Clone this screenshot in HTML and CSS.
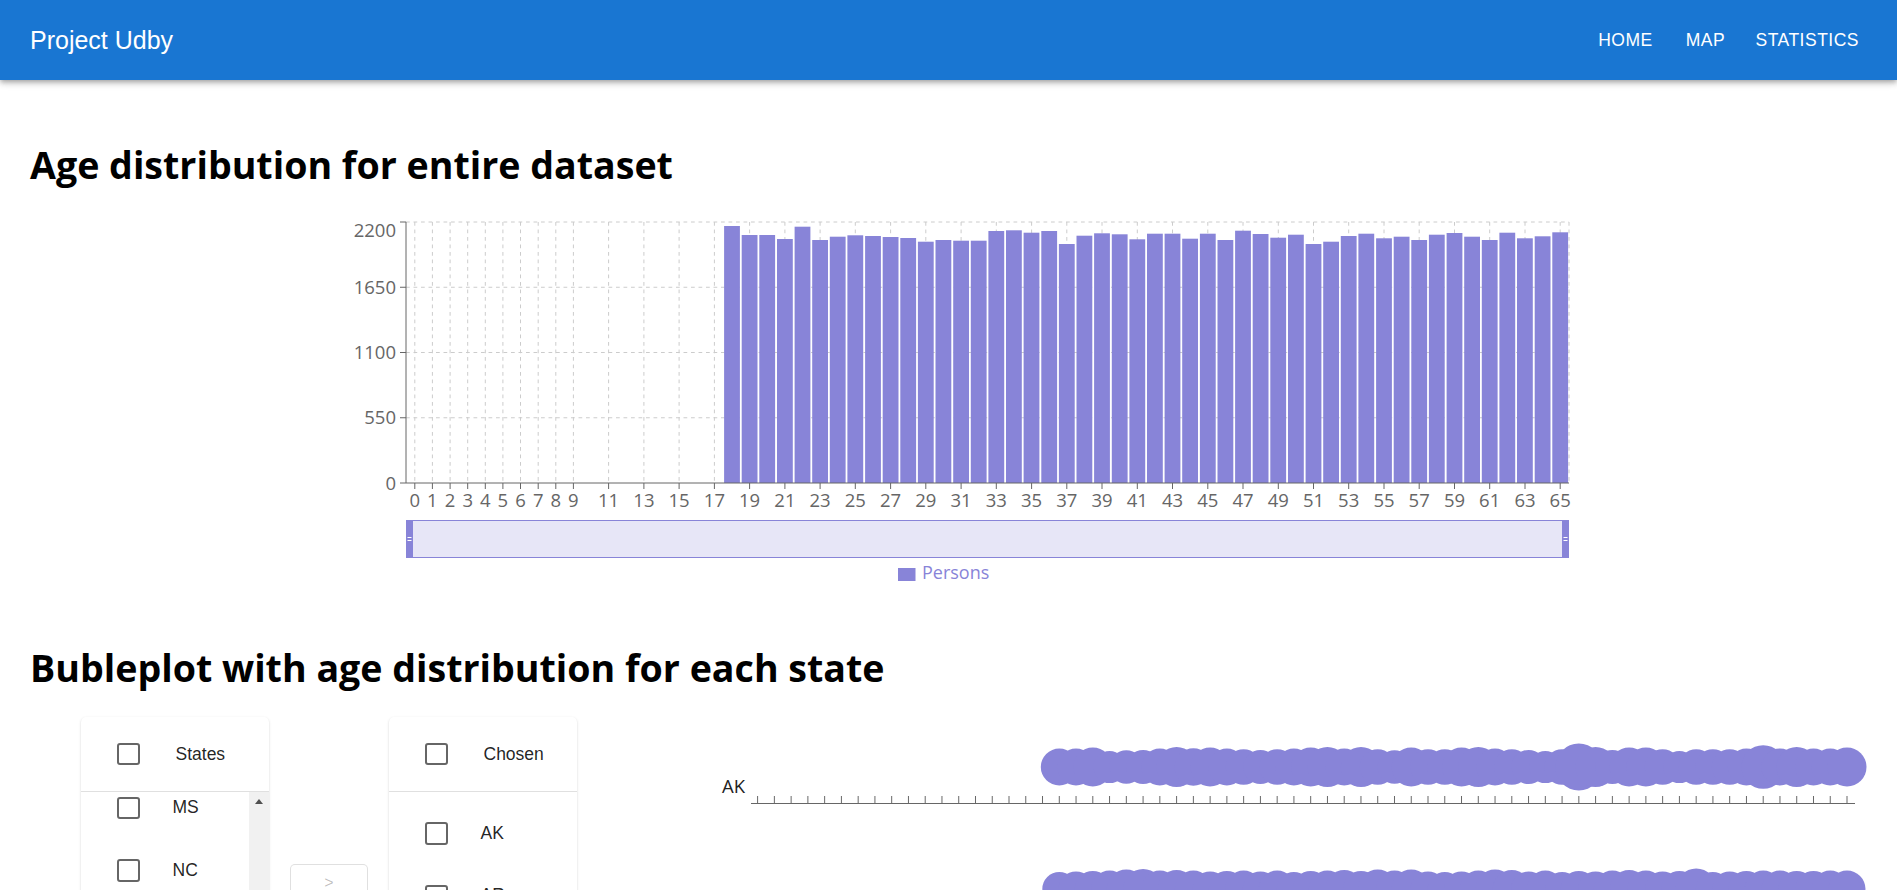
FILE: index.html
```html
<!DOCTYPE html>
<html lang="en">
<head>
<meta charset="utf-8">
<title>Project Udby</title>
<link rel="stylesheet" href="styles.css">
</head>
<body>
<header class="appbar">
  <div class="toolbar">
    <div class="brand">Project Udby</div>
    <nav class="nav">
      <a class="nav-btn">HOME</a>
      <a class="nav-btn">MAP</a>
      <a class="nav-btn">STATISTICS</a>
    </nav>
  </div>
</header>

<main class="page">
  <h1 class="title">Age distribution for entire dataset</h1>

  <div class="chart-wrap">
    <svg class="bar-chart" width="1253" height="385" viewBox="322 210 1253 385">
      <g class="grid" fill="none" stroke="#ccc" stroke-dasharray="3.75 3.75">
        <path d="M406 222H1569M406 287.25H1569M406 352.5H1569M406 417.75H1569"/>
        <path d="M414.8 222V483M432.4 222V483M450.1 222V483M467.7 222V483M485.3 222V483M502.9 222V483M520.5 222V483M538.2 222V483M555.8 222V483M573.4 222V483M608.6 222V483M643.9 222V483M679.1 222V483M714.4 222V483M749.6 222V483M784.9 222V483M820.1 222V483M855.3 222V483M890.6 222V483M925.8 222V483M961.1 222V483M996.3 222V483M1031.6 222V483M1066.8 222V483M1102 222V483M1137.3 222V483M1172.5 222V483M1207.8 222V483M1243 222V483M1278.3 222V483M1313.5 222V483M1348.7 222V483M1384 222V483M1419.2 222V483M1454.5 222V483M1489.7 222V483M1525 222V483M1560.2 222V483M1569 222V483"/>
      </g>
      <g class="bars" fill="#8884d8">
        <rect x="724.1" y="226" width="15.8" height="257"/>
        <rect x="741.7" y="235" width="15.8" height="248"/>
        <rect x="759.3" y="235" width="15.8" height="248"/>
        <rect x="777" y="239" width="15.8" height="244"/>
        <rect x="794.6" y="226.7" width="15.8" height="256.3"/>
        <rect x="812.2" y="240" width="15.8" height="243"/>
        <rect x="829.8" y="236.7" width="15.8" height="246.3"/>
        <rect x="847.4" y="235.3" width="15.8" height="247.7"/>
        <rect x="865.1" y="236" width="15.8" height="247"/>
        <rect x="882.7" y="237" width="15.8" height="246"/>
        <rect x="900.3" y="238" width="15.8" height="245"/>
        <rect x="917.9" y="241.7" width="15.8" height="241.3"/>
        <rect x="935.5" y="240" width="15.8" height="243"/>
        <rect x="953.2" y="240.7" width="15.8" height="242.3"/>
        <rect x="970.8" y="240.7" width="15.8" height="242.3"/>
        <rect x="988.4" y="231" width="15.8" height="252"/>
        <rect x="1006" y="230.3" width="15.8" height="252.7"/>
        <rect x="1023.6" y="232.7" width="15.8" height="250.3"/>
        <rect x="1041.3" y="231" width="15.8" height="252"/>
        <rect x="1058.9" y="244" width="15.8" height="239"/>
        <rect x="1076.5" y="235.7" width="15.8" height="247.3"/>
        <rect x="1094.1" y="233.3" width="15.8" height="249.7"/>
        <rect x="1111.8" y="234.3" width="15.8" height="248.7"/>
        <rect x="1129.4" y="239.3" width="15.8" height="243.7"/>
        <rect x="1147" y="233.7" width="15.8" height="249.3"/>
        <rect x="1164.6" y="233.7" width="15.8" height="249.3"/>
        <rect x="1182.2" y="238.7" width="15.8" height="244.3"/>
        <rect x="1199.9" y="233.7" width="15.8" height="249.3"/>
        <rect x="1217.5" y="240" width="15.8" height="243"/>
        <rect x="1235.1" y="230.7" width="15.8" height="252.3"/>
        <rect x="1252.7" y="234" width="15.8" height="249"/>
        <rect x="1270.3" y="237.7" width="15.8" height="245.3"/>
        <rect x="1288" y="234.7" width="15.8" height="248.3"/>
        <rect x="1305.6" y="244" width="15.8" height="239"/>
        <rect x="1323.2" y="241.7" width="15.8" height="241.3"/>
        <rect x="1340.8" y="236" width="15.8" height="247"/>
        <rect x="1358.4" y="233.7" width="15.8" height="249.3"/>
        <rect x="1376.1" y="238.3" width="15.8" height="244.7"/>
        <rect x="1393.7" y="236.7" width="15.8" height="246.3"/>
        <rect x="1411.3" y="240" width="15.8" height="243"/>
        <rect x="1428.9" y="234.7" width="15.8" height="248.3"/>
        <rect x="1446.6" y="233" width="15.8" height="250"/>
        <rect x="1464.2" y="236.7" width="15.8" height="246.3"/>
        <rect x="1481.8" y="240" width="15.8" height="243"/>
        <rect x="1499.4" y="232.7" width="15.8" height="250.3"/>
        <rect x="1517" y="238.3" width="15.8" height="244.7"/>
        <rect x="1534.7" y="236.3" width="15.8" height="246.7"/>
        <rect x="1552.3" y="232.3" width="15.8" height="250.7"/>
      </g>
      <g class="axes" fill="none" stroke="#666">
        <path d="M406 222V483H1569"/>
        <path d="M400 222H406M400 287.25H406M400 352.5H406M400 417.75H406M400 483H406"/>
        <path d="M414.8 483V489M432.4 483V489M450.1 483V489M467.7 483V489M485.3 483V489M502.9 483V489M520.5 483V489M538.2 483V489M555.8 483V489M573.4 483V489M608.6 483V489M643.9 483V489M679.1 483V489M714.4 483V489M749.6 483V489M784.9 483V489M820.1 483V489M855.3 483V489M890.6 483V489M925.8 483V489M961.1 483V489M996.3 483V489M1031.6 483V489M1066.8 483V489M1102 483V489M1137.3 483V489M1172.5 483V489M1207.8 483V489M1243 483V489M1278.3 483V489M1313.5 483V489M1348.7 483V489M1384 483V489M1419.2 483V489M1454.5 483V489M1489.7 483V489M1525 483V489M1560.2 483V489"/>
      </g>
      <g class="tick-text y-ticks" text-anchor="end">
        <text x="396" y="236.6">2200</text>
        <text x="396" y="293.8">1650</text>
        <text x="396" y="359.1">1100</text>
        <text x="396" y="424.3">550</text>
        <text x="396" y="489.6">0</text>
      </g>
      <g class="tick-text x-ticks" text-anchor="middle">
        <text x="414.8" y="506.6">0</text><text x="432.4" y="506.6">1</text><text x="450.1" y="506.6">2</text><text x="467.7" y="506.6">3</text><text x="485.3" y="506.6">4</text><text x="502.9" y="506.6">5</text><text x="520.5" y="506.6">6</text><text x="538.2" y="506.6">7</text><text x="555.8" y="506.6">8</text><text x="573.4" y="506.6">9</text>
        <text x="608.6" y="506.6">11</text><text x="643.9" y="506.6">13</text><text x="679.1" y="506.6">15</text><text x="714.4" y="506.6">17</text><text x="749.6" y="506.6">19</text><text x="784.9" y="506.6">21</text><text x="820.1" y="506.6">23</text><text x="855.3" y="506.6">25</text><text x="890.6" y="506.6">27</text><text x="925.8" y="506.6">29</text><text x="961.1" y="506.6">31</text><text x="996.3" y="506.6">33</text><text x="1031.6" y="506.6">35</text><text x="1066.8" y="506.6">37</text><text x="1102" y="506.6">39</text><text x="1137.3" y="506.6">41</text><text x="1172.5" y="506.6">43</text><text x="1207.8" y="506.6">45</text><text x="1243" y="506.6">47</text><text x="1278.3" y="506.6">49</text><text x="1313.5" y="506.6">51</text><text x="1348.7" y="506.6">53</text><text x="1384" y="506.6">55</text><text x="1419.2" y="506.6">57</text><text x="1454.5" y="506.6">59</text><text x="1489.7" y="506.6">61</text><text x="1525" y="506.6">63</text><text x="1560.2" y="506.6">65</text>
      </g>
      <g class="brush">
        <rect x="406.5" y="520.5" width="1162" height="37" fill="#fff" stroke="#8884d8"/>
        <rect x="413" y="521" width="1149" height="36" fill="#8884d8" fill-opacity="0.2"/>
        <rect x="406" y="520" width="7" height="38" fill="#8884d8"/>
        <path d="M407.5 537.5H411.5M407.5 540.5H411.5" stroke="#fff"/>
        <rect x="1562" y="520" width="7" height="38" fill="#8884d8"/>
        <path d="M1563.5 537.5H1567.5M1563.5 540.5H1567.5" stroke="#fff"/>
      </g>
      <g class="legend">
        <rect x="898" y="568" width="17.5" height="13" fill="#8884d8"/>
        <text class="legend-text" x="922" y="579">Persons</text>
      </g>
    </svg>
  </div>

  <h2 class="title">Bubleplot with age distribution for each state</h2>

  <section class="bubble-section">
    <div class="transfer">
      <div class="card">
        <div class="card-head">
          <span class="checkbox"></span>
          <span class="head-label">States</span>
        </div>
        <div class="card-body">
          <div class="list-viewport">
            <ul class="list list-scrolled">
              <li class="item"><span class="checkbox"></span><span class="item-label">MS</span></li>
              <li class="item"><span class="checkbox"></span><span class="item-label">NC</span></li>
            </ul>
          </div>
          <div class="scrollbar"><span class="scroll-arrow"></span></div>
        </div>
      </div>

      <div class="move-col">
        <button class="move-btn" disabled>&gt;</button>
        <button class="move-btn" disabled>&lt;</button>
      </div>

      <div class="card">
        <div class="card-head">
          <span class="checkbox"></span>
          <span class="head-label">Chosen</span>
        </div>
        <div class="card-body">
          <div class="list-viewport">
            <ul class="list list-top">
              <li class="item"><span class="checkbox"></span><span class="item-label">AK</span></li>
              <li class="item"><span class="checkbox"></span><span class="item-label">AR</span></li>
            </ul>
          </div>
        </div>
      </div>
    </div>

    <div class="bubbles">
      <svg class="bubble-row" width="1225" height="122" viewBox="651 0 1225 122">
        <defs>
          <pattern id="tick-pattern" x="749.22" y="0" width="16.76" height="122" patternUnits="userSpaceOnUse">
            <rect x="7.88" y="66" width="1" height="7" fill="#666"/>
          </pattern>
        </defs>
        <text class="row-label" x="745" y="62.5" text-anchor="end">AK</text>
        <rect x="749.22" y="66" width="1106" height="7" fill="url(#tick-pattern)"/>
        <path d="M751 73.5H1855" stroke="#666"/>
        <g fill="#8884d8">
          <circle cx="1059.3" cy="37" r="18.5"/><circle cx="1076" cy="37" r="18.5"/><circle cx="1092.8" cy="37" r="19.5"/><circle cx="1109.6" cy="37" r="16.1"/><circle cx="1126.3" cy="37" r="16.8"/><circle cx="1143.1" cy="37" r="17.1"/><circle cx="1159.8" cy="37" r="18.5"/><circle cx="1176.6" cy="37" r="20.1"/><circle cx="1193.4" cy="37" r="18.8"/><circle cx="1210.1" cy="37" r="19.5"/><circle cx="1226.9" cy="37" r="18.5"/><circle cx="1243.6" cy="37" r="17.8"/><circle cx="1260.4" cy="37" r="17.1"/><circle cx="1277.2" cy="37" r="17.8"/><circle cx="1293.9" cy="37" r="18.5"/><circle cx="1310.7" cy="37" r="19.5"/><circle cx="1327.4" cy="37" r="20.1"/><circle cx="1344.2" cy="37" r="18.5"/><circle cx="1361" cy="37" r="20.1"/><circle cx="1377.7" cy="37" r="17.8"/><circle cx="1394.5" cy="37" r="16.8"/><circle cx="1411.2" cy="37" r="19.5"/><circle cx="1428" cy="37" r="17.8"/><circle cx="1444.8" cy="37" r="17.8"/><circle cx="1461.5" cy="37" r="19.5"/><circle cx="1478.3" cy="37" r="20.1"/><circle cx="1495" cy="37" r="18.5"/><circle cx="1511.8" cy="37" r="17.8"/><circle cx="1528.6" cy="37" r="17.1"/><circle cx="1545.3" cy="37" r="16.1"/><circle cx="1562.1" cy="37" r="17.8"/><circle cx="1578.8" cy="37" r="23.5"/><circle cx="1595.6" cy="37" r="20.1"/><circle cx="1612.4" cy="37" r="17.1"/><circle cx="1629.1" cy="37" r="19.5"/><circle cx="1645.9" cy="37" r="19.5"/><circle cx="1662.6" cy="37" r="17.8"/><circle cx="1679.4" cy="37" r="16.1"/><circle cx="1696.2" cy="37" r="17.8"/><circle cx="1712.9" cy="37" r="17.8"/><circle cx="1729.7" cy="37" r="17.8"/><circle cx="1746.4" cy="37" r="18.5"/><circle cx="1763.2" cy="37" r="21.8"/><circle cx="1780" cy="37" r="18.5"/><circle cx="1796.7" cy="37" r="20.1"/><circle cx="1813.5" cy="37" r="18.5"/><circle cx="1830.2" cy="37" r="18.5"/><circle cx="1847" cy="37" r="19.5"/>
        </g>
      </svg>
      <svg class="bubble-row" width="1225" height="122" viewBox="651 0 1225 122">
        <text class="row-label" x="745" y="62.5" text-anchor="end">AR</text>
        <rect x="749.22" y="66" width="1106" height="7" fill="url(#tick-pattern)"/>
        <path d="M751 73.5H1855" stroke="#666"/>
        <g fill="#8884d8">
          <circle cx="1059.3" cy="37" r="17"/><circle cx="1076" cy="37" r="17.5"/><circle cx="1092.8" cy="37" r="18"/><circle cx="1109.6" cy="37" r="18.5"/><circle cx="1126.3" cy="37" r="19.5"/><circle cx="1143.1" cy="37" r="20"/><circle cx="1159.8" cy="37" r="18.5"/><circle cx="1176.6" cy="37" r="19"/><circle cx="1193.4" cy="37" r="18.5"/><circle cx="1210.1" cy="37" r="17.5"/><circle cx="1226.9" cy="37" r="18"/><circle cx="1243.6" cy="37" r="18.5"/><circle cx="1260.4" cy="37" r="17.5"/><circle cx="1277.2" cy="37" r="18.5"/><circle cx="1293.9" cy="37" r="17"/><circle cx="1310.7" cy="37" r="18"/><circle cx="1327.4" cy="37" r="18.5"/><circle cx="1344.2" cy="37" r="19"/><circle cx="1361" cy="37" r="18"/><circle cx="1377.7" cy="37" r="19.5"/><circle cx="1394.5" cy="37" r="18.5"/><circle cx="1411.2" cy="37" r="19.5"/><circle cx="1428" cy="37" r="17.5"/><circle cx="1444.8" cy="37" r="17"/><circle cx="1461.5" cy="37" r="17.5"/><circle cx="1478.3" cy="37" r="18.5"/><circle cx="1495" cy="37" r="19.5"/><circle cx="1511.8" cy="37" r="19"/><circle cx="1528.6" cy="37" r="17.5"/><circle cx="1545.3" cy="37" r="18.5"/><circle cx="1562.1" cy="37" r="17"/><circle cx="1578.8" cy="37" r="18"/><circle cx="1595.6" cy="37" r="17.5"/><circle cx="1612.4" cy="37" r="18.5"/><circle cx="1629.1" cy="37" r="19"/><circle cx="1645.9" cy="37" r="18.5"/><circle cx="1662.6" cy="37" r="17.5"/><circle cx="1679.4" cy="37" r="18"/><circle cx="1696.2" cy="37" r="20.5"/><circle cx="1712.9" cy="37" r="17"/><circle cx="1729.7" cy="37" r="17.5"/><circle cx="1746.4" cy="37" r="18"/><circle cx="1763.2" cy="37" r="18.5"/><circle cx="1780" cy="37" r="18.5"/><circle cx="1796.7" cy="37" r="18"/><circle cx="1813.5" cy="37" r="18"/><circle cx="1830.2" cy="37" r="18.5"/><circle cx="1847" cy="37" r="18.5"/>
        </g>
      </svg>
    </div>
  </section>
</main>
</body>
</html>
```

FILE: styles.css
```css
* {
  box-sizing: border-box;
}

html, body {
  margin: 0;
  padding: 0;
  background: #fff;
}

body {
  font-family: "Liberation Sans", Arial, sans-serif;
  color: rgba(0, 0, 0, 0.87);
}

/* ---------- App bar ---------- */
.appbar {
  position: relative;
  z-index: 2;
  background: #1976d2;
  color: #fff;
  box-shadow: 0 2px 4px -1px rgba(0, 0, 0, 0.2),
              0 4px 5px 0 rgba(0, 0, 0, 0.14),
              0 1px 10px 0 rgba(0, 0, 0, 0.12);
}

.toolbar {
  height: 80px;
  display: flex;
  align-items: center;
  justify-content: space-between;
  padding: 0 28px 0 30px;
}

.brand {
  font-size: 25px;
  line-height: 1.6;
  font-weight: 400;
}

.nav {
  display: flex;
  align-items: center;
}

.nav-btn {
  display: inline-flex;
  align-items: center;
  justify-content: center;
  min-width: 80px;
  height: 45px;
  padding: 0 10px;
  font-size: 17.5px;
  letter-spacing: 0.5px;
  text-transform: uppercase;
  color: #fff;
  cursor: pointer;
}

/* ---------- Page ---------- */
.page {
  padding: 0 30px;
}

.title {
  font-family: "Open Sans", "Noto Sans", sans-serif;
  font-weight: 700;
  font-size: 37.6px;
  line-height: 50px;
  color: #000;
  margin: 60px 0 20px;
}

h2.title {
  margin: 48px 0 24px;
}

.chart-wrap {
  display: flex;
  justify-content: center;
}

.bar-chart {
  display: block;
  overflow: visible;
}

.tick-text text {
  font-family: "Open Sans", "Noto Sans", sans-serif;
  font-size: 18.5px;
  fill: #666;
}

.legend-text {
  font-family: "Open Sans", "Noto Sans", sans-serif;
  font-size: 18px;
  fill: #8884d8;
}

/* ---------- Transfer list ---------- */
.bubble-section {
  display: flex;
  align-items: flex-start;
  padding-left: 51px;
}

.transfer {
  display: flex;
  gap: 21px;
  flex: none;
}

.card {
  width: 188px;
  height: 382px;
  background: #fff;
  border-radius: 5px;
  box-shadow: 0 2px 1px -1px rgba(0, 0, 0, 0.2),
              0 1px 1px 0 rgba(0, 0, 0, 0.14),
              0 1px 3px 0 rgba(0, 0, 0, 0.12);
  display: flex;
  flex-direction: column;
  overflow: hidden;
}

.card-head {
  height: 75px;
  flex: none;
  display: flex;
  align-items: center;
  padding-left: 36px;
  border-bottom: 1px solid #e0e0e0;
}

.checkbox {
  flex: none;
  width: 22.5px;
  height: 22.5px;
  border: 2.8px solid #666;
  border-radius: 3px;
  background: #fff;
}

.head-label {
  margin-left: 36px;
  font-size: 17.5px;
  color: rgba(0, 0, 0, 0.87);
}

.card-body {
  flex: 1;
  display: flex;
  min-height: 0;
}

.list-viewport {
  flex: 1;
  overflow: hidden;
}

.list {
  list-style: none;
  margin: 0;
  padding: 0;
}

.list-top {
  padding-top: 10px;
}

.list-scrolled {
  margin-top: -15.5px;
}

.item {
  height: 62.5px;
  display: flex;
  align-items: center;
  padding-left: 36px;
}

.item-label {
  margin-left: 33px;
  font-size: 17.5px;
  color: rgba(0, 0, 0, 0.87);
}

.scrollbar {
  width: 20px;
  flex: none;
  background: #f1f1f1;
  display: flex;
  justify-content: center;
  padding-top: 7px;
}

.scroll-arrow {
  width: 0;
  height: 0;
  border-left: 4.5px solid transparent;
  border-right: 4.5px solid transparent;
  border-bottom: 5px solid #505050;
}

.move-col {
  width: 78px;
  height: 382px;
  display: flex;
  flex-direction: column;
  justify-content: center;
  align-items: center;
}

.move-btn {
  width: 78px;
  height: 38px;
  margin: 6px 0;
  border: 1px solid rgba(0, 0, 0, 0.12);
  border-radius: 5px;
  background: #fff;
  color: rgba(0, 0, 0, 0.26);
  font-family: "Liberation Sans", Arial, sans-serif;
  font-size: 16px;
  padding: 0;
}

/* ---------- Bubble plot ---------- */
.bubbles {
  margin-left: 74px;
  margin-top: 13px;
  display: flex;
  flex-direction: column;
}

.bubble-row {
  display: block;
}

.row-label {
  font-family: "Open Sans", "Noto Sans", sans-serif;
  font-size: 18.5px;
  fill: #222;
}
```
